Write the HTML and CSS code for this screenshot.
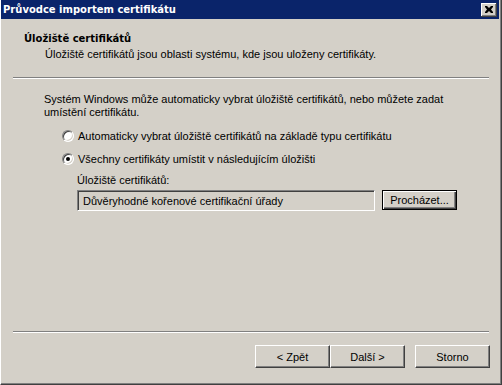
FILE: index.html
```html
<!DOCTYPE html>
<html lang="cs">
	<head>
		<meta charset="UTF-8" />
		<title>Průvodce importem certifikátu</title>
		<link rel="stylesheet" href="styles.css">
	</head>
	<body>
		<div class="window">
			<div class="titlebar">
				<span class="title">Průvodce importem certifikátu</span>
				<button class="close" type="button">
					<svg width="8" height="7" viewBox="0 0 8 7">
						<path d="M0 0h2l2 2 2-2h2v1L6 3.5 8 6v1H6L4 5 2 7H0V6l2-2.5L0 1z" fill="#000"/>
					</svg>
				</button>
			</div>

			<div class="header">
				<h1>Úložiště certifikátů</h1>
				<p>Úložiště certifikátů jsou oblasti systému, kde jsou uloženy certifikáty.</p>
			</div>
			<div class="separator"></div>

			<div class="content">
				<p class="intro">
					Systém Windows může automaticky vybrat úložiště certifikátů, nebo můžete zadat<br />
					umístění certifikátu.
				</p>

				<label class="radio-row">
					<span class="radio"></span>
					Automaticky vybrat úložiště certifikátů na základě typu certifikátu
				</label>
				<label class="radio-row">
					<span class="radio checked"></span>
					Všechny certifikáty umístit v následujícím úložišti
				</label>

				<div class="store">
					<div class="store-label">Úložiště certifikátů:</div>
					<div class="store-row">
						<div class="textbox">Důvěryhodné kořenové certifikační úřady</div>
						<button class="btn default" type="button">Procházet...</button>
					</div>
				</div>
			</div>

			<div class="separator"></div>
			<div class="footer">
				<button class="btn" type="button">&lt; Zpět</button>
				<button class="btn" type="button">Další &gt;</button>
				<button class="btn cancel" type="button">Storno</button>
			</div>
		</div>
	</body>
</html>
```

FILE: styles.css
```css
* {
	margin: 0;
	padding: 0;
	box-sizing: border-box;
}

body {
	font-family: "Liberation Sans", Arial, sans-serif;
	font-size: 11px;
	line-height: 13px;
	color: #000;
	background-color: #d4d0c8;
}

.window {
	width: 502px;
	height: 385px;
	display: flex;
	flex-direction: column;
	background-color: #d4d0c8;
	border-left: 1px solid #fff;
	border-right: 1px solid #404040;
	border-bottom: 1px solid #404040;
	padding: 0 2px 1px 0;
	box-shadow: inset -1px -1px 0 #808080;
}

/* title bar */
.titlebar {
	height: 19px;
	flex-shrink: 0;
	display: flex;
	align-items: center;
	justify-content: space-between;
	background-color: #0a246a;
	padding: 0 2px 0 2px;
}

.title {
	color: #fff;
	font-family: "DejaVu Sans", sans-serif;
	font-weight: bold;
	font-size: 10px;
}

.close {
	width: 16px;
	height: 14px;
	display: flex;
	align-items: center;
	justify-content: center;
	background-color: #d4d0c8;
	border: none;
	box-shadow: inset -1px -1px 0 #404040, inset 1px 1px 0 #fff,
		inset -2px -2px 0 #808080;
	padding: 0 1px 1px 0;
}

/* header */
.header {
	height: 58px;
	flex-shrink: 0;
	padding: 13px 0 0 23px;
}

h1 {
	font-family: "DejaVu Sans", sans-serif;
	font-size: 10px;
	font-weight: bold;
	line-height: 13px;
}

.header p {
	margin: 3px 0 0 21px;
}

.separator {
	height: 2px;
	flex-shrink: 0;
	margin: 0 10px 0 12px;
	border-top: 1px solid #808080;
	border-bottom: 1px solid #fff;
}

/* main area */
.content {
	flex: 1;
	padding: 14px 0 0 43px;
}

.intro {
	margin-bottom: 9px;
}

.radio-row {
	display: flex;
	align-items: center;
	gap: 3px;
	height: 16px;
	margin: 0 0 7px 18px;
}

.radio {
	width: 12px;
	height: 12px;
	flex-shrink: 0;
	border-radius: 50%;
	margin-right: 1px;
	background-color: #fff;
	border: 1px solid;
	border-color: #808080 #fff #fff #808080;
	box-shadow: inset 1px 1px 0 #404040, inset -1px -1px 0 #d4d0c8;
	position: relative;
}

.radio.checked::after {
	content: "";
	position: absolute;
	left: 3px;
	top: 3px;
	width: 4px;
	height: 4px;
	border-radius: 50%;
	background-color: #000;
}

.store {
	margin: 3px 0 0 33px;
}

.store-row {
	display: flex;
	gap: 7px;
	margin-top: 3px;
}

.textbox {
	width: 298px;
	height: 21px;
	padding: 4px 0 0 5px;
	background-color: #d4d0c8;
	border: 1px solid;
	border-color: #808080 #fff #fff #808080;
	box-shadow: inset 1px 1px 0 #404040, inset -1px -1px 0 #d4d0c8;
}

/* buttons */
.btn {
	width: 75px;
	height: 23px;
	font-family: inherit;
	font-size: 11px;
	color: #000;
	background-color: #d4d0c8;
	border: 1px solid;
	border-color: #fff #404040 #404040 #fff;
	box-shadow: inset -1px -1px 0 #808080;
}

.btn.default {
	height: 20px;
	border: 1px solid #000;
	box-shadow: inset 1px 1px 0 #fff, inset -1px -1px 0 #404040,
		inset -2px -2px 0 #808080;
}

.footer {
	height: 50px;
	flex-shrink: 0;
	display: flex;
	justify-content: flex-end;
	padding: 12px 9px 0 0;
}

.btn.cancel {
	margin-left: 10px;
}
```
